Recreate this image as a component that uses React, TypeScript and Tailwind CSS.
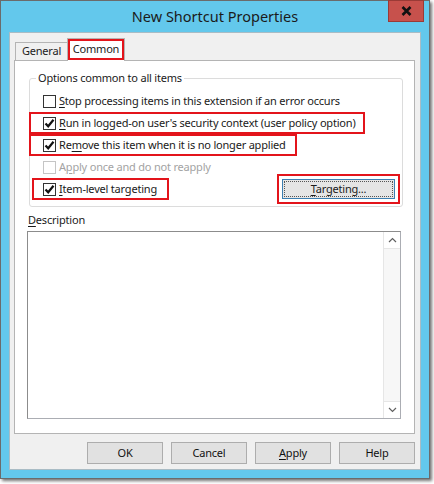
import type { ReactNode } from "react";

// access-key letter, underlined like the Win32 dialog shows them
function K({ children }: { children: ReactNode }) {
  return <span className="underline decoration-1 underline-offset-[2px]">{children}</span>;
}

function Checkbox({ checked, disabled }: { checked?: boolean; disabled?: boolean }) {
  return (
    <span
      className={`flex h-[13px] w-[13px] shrink-0 items-center justify-center border bg-white ${
        disabled ? "border-[#c5c5c5]" : "border-[#333333]"
      }`}
    >
      {checked && (
        <svg width="11" height="11" viewBox="0 0 11 11">
          <path d="M1.5 5.5 L4.2 8.3 L9.5 1.8" fill="none" stroke="#111" strokeWidth="2.2" />
        </svg>
      )}
    </span>
  );
}

function DialogButton({ children }: { children: ReactNode }) {
  return (
    <button className="flex h-[22px] w-[76px] items-center justify-center border border-[#adadad] bg-[#e1e1e1] text-[#111]">
      {children}
    </button>
  );
}

export default function App() {
  return (
    <div className="h-[484px] w-[434px] overflow-hidden whitespace-nowrap bg-white font-['Noto_Sans',sans-serif] text-[11px] tracking-[-0.2px] text-[#1a1a1a]">
      <div className="relative flex h-[479px] w-[430px] flex-col border border-[#6b6b6b] bg-[#63c8ec] shadow-[2px_2px_3px_rgba(0,0,0,0.55)]">
        {/* title bar */}
        <div className="flex h-[31px] shrink-0 items-center justify-center text-[14.5px] tracking-normal text-[#1b1b1b]">
          New Shortcut Properties
        </div>
        <button className="absolute right-[5px] top-[-1px] flex h-[22px] w-[36px] items-center justify-center border border-[#9a3a36] bg-[#c7514c]">
          <svg width="11" height="10" viewBox="0 0 11 10">
            <path d="M1.5 1 L9.5 9 M9.5 1 L1.5 9" stroke="#111" strokeWidth="2.6" />
          </svg>
        </button>

        {/* client area */}
        <div className="mx-[8px] mb-[8px] flex flex-1 flex-col border border-[#a9bcc5] bg-[#f0f0f0] pt-[5px]">
          {/* tabs */}
          <div className="flex h-[22px] items-end pl-[5px]">
            <div className="flex h-[18px] w-[52px] items-center justify-center border border-b-0 border-r-0 border-[#b4b4b4] bg-[#f0f0f0] text-[#222]">
              General
            </div>
            <div className="relative z-10 mb-[-1px] flex h-[23px] w-[58px] items-center justify-center border border-b-0 border-[#b4b4b4] bg-white pb-[2px]">
              <span className="absolute inset-x-0 bottom-[1px] top-0 border-2 border-[#e3141b]" />
              Common
            </div>
          </div>

          {/* tab page */}
          <div className="ml-[4px] flex h-[374px] w-[401px] flex-col border border-[#b4b4b4] bg-white">
            {/* group box */}
            <div className="ml-[14px] mt-[17px] w-[374px] rounded-[3px] border border-[#dcdcdc] pb-[6px]">
              <div className="-mt-[9px] ml-[6px] h-[16px] w-fit bg-white px-[2px] leading-[16px]">
                Options common to all items
              </div>

              <div className="mt-[5px] flex flex-col">
                <div className="flex h-[21px] items-center gap-[3px] pl-[13px]">
                  <Checkbox />
                  <span>
                    <K>S</K>top processing items in this extension if an error occurs
                  </span>
                </div>
                <div className="-ml-px flex h-[22px] w-[336px] items-center gap-[3px] border-2 border-[#e3141b] pl-[12px]">
                  <Checkbox checked />
                  <span>
                    <K>R</K>un in logged-on user's security context (user policy option)
                  </span>
                </div>
                <div className="-ml-px flex h-[22px] w-[268px] items-center gap-[3px] border-2 border-[#e3141b] pl-[12px]">
                  <Checkbox checked />
                  <span>
                    Re<K>m</K>ove this item when it is no longer applied
                  </span>
                </div>
                <div className="flex h-[22px] items-center gap-[3px] pl-[13px] text-[#a3a3a3]">
                  <Checkbox disabled />
                  <span>
                    A<K>p</K>ply once and do not reapply
                  </span>
                </div>
                <div className="flex h-[22px] items-center justify-between pr-[2px]">
                  <div className="ml-[2px] flex h-[22px] w-[137px] items-center gap-[3px] border-2 border-[#e3141b] pl-[9px]">
                    <Checkbox checked />
                    <span>
                      <K>I</K>tem-level targeting
                    </span>
                  </div>
                  <div className="-my-[4px] border-2 border-[#e3141b] p-[3px]">
                    <button className="flex h-[20px] w-[113px] items-center justify-center border border-[#3c7fb1] bg-[#e5e5e5] p-[1px]">
                      <span className="flex h-full w-full items-center justify-center border border-dotted border-[#555]">
                        <span>
                          <K>T</K>argeting...
                        </span>
                      </span>
                    </button>
                  </div>
                </div>
              </div>
            </div>

            {/* description */}
            <div className="ml-[13px] mt-[5px] h-[16px] leading-[16px]">
              <K>D</K>escription
            </div>
            <div className="ml-[12px] mt-[3px] flex h-[188px] w-[374px] justify-end border border-[#abadb3] border-l-[#8c8c8c] border-t-[#8c8c8c] bg-white">
              <div className="flex w-[17px] flex-col justify-between border-l border-[#e6e6e6] bg-[#f7f7f7]">
                <div className="flex h-[17px] items-center justify-center border-b border-[#e6e6e6] bg-white">
                  <svg width="9" height="6" viewBox="0 0 9 6">
                    <path d="M1 5 L4.5 1.5 L8 5" fill="none" stroke="#606060" strokeWidth="1.2" />
                  </svg>
                </div>
                <div className="flex h-[17px] items-center justify-center border-t border-[#e6e6e6] bg-white">
                  <svg width="9" height="6" viewBox="0 0 9 6">
                    <path d="M1 1 L4.5 4.5 L8 1" fill="none" stroke="#606060" strokeWidth="1.2" />
                  </svg>
                </div>
              </div>
            </div>
          </div>

          {/* dialog buttons */}
          <div className="mt-[8px] flex justify-end gap-[8px] pr-[5px]">
            <DialogButton>OK</DialogButton>
            <DialogButton>Cancel</DialogButton>
            <DialogButton>
              <span>
                <K>A</K>pply
              </span>
            </DialogButton>
            <DialogButton>Help</DialogButton>
          </div>
        </div>
      </div>
    </div>
  );
}
